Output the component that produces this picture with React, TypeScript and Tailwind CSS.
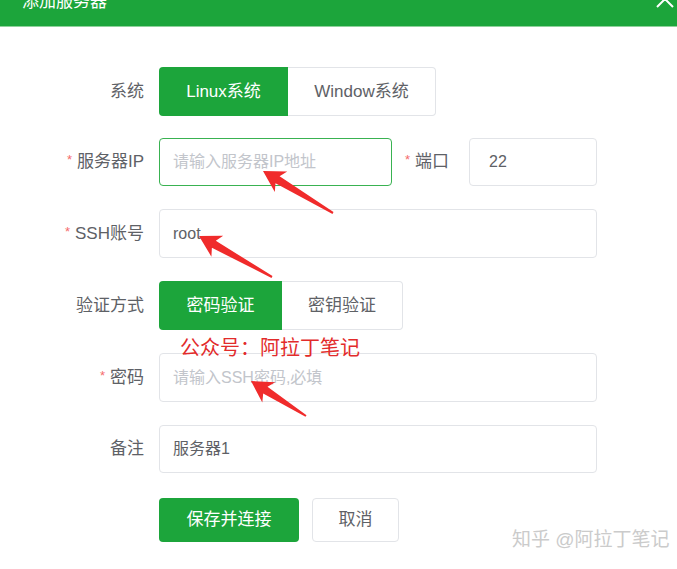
import React from 'react';

const GREEN = 'bg-[#1ca53b]';

type Pt = [number, number];

function arrowPoints(tip: Pt, tail: Pt): string {
  const dx = tail[0] - tip[0];
  const dy = tail[1] - tip[1];
  const len = Math.hypot(dx, dy);
  const ux = dx / len;
  const uy = dy / len;
  const nx = -uy;
  const ny = ux;
  const headLen = 21;
  const headHalf = 12;
  const neckHalf = 4;
  const tailHalf = 1;
  const at = (d: number, w: number): string =>
    `${(tip[0] + ux * d + nx * w).toFixed(1)},${(tip[1] + uy * d + ny * w).toFixed(1)}`;
  return [
    at(0, 0),
    at(headLen, headHalf),
    at(headLen - 4, neckHalf),
    at(len, tailHalf),
    at(len, -tailHalf),
    at(headLen - 4, -neckHalf),
    at(headLen, -headHalf),
  ].join(' ');
}

const Label: React.FC<{ text: string; required?: boolean }> = ({ text, required }) => (
  <div className="w-[144px] shrink-0 flex items-center justify-end text-[17px] text-[#5e6166]">
    {required && <span className="text-[#f56c6c] text-[13px] mr-[5px] -mt-[4px]">*</span>}
    <span>{text}</span>
  </div>
);

const Input: React.FC<{ value?: string; placeholder?: string; focused?: boolean; className?: string }> = ({
  value,
  placeholder,
  focused,
  className = '',
}) => (
  <div
    className={`h-full flex items-center px-[13px] rounded-[4px] border text-[16px] ${
      focused ? 'border-[#39b251]' : 'border-[#e2e4e8]'
    } ${className}`}
  >
    {value ? (
      <span className="text-[#5e6166]">{value}</span>
    ) : (
      <span className="text-[#c2c5cb]">{placeholder}</span>
    )}
  </div>
);

const Segmented: React.FC<{ items: { label: string; w: string }[] }> = ({ items }) => (
  <div className="flex h-full">
    {items.map((it, i) => (
      <div
        key={it.label}
        className={`${it.w} h-full flex items-center justify-center text-[17px] ${
          i === 0
            ? `${GREEN} text-white rounded-l-[4px]`
            : 'bg-white text-[#5e6166] border border-l-0 border-[#e2e4e8] rounded-r-[4px]'
        }`}
      >
        {it.label}
      </div>
    ))}
  </div>
);

export default function App() {
  return (
    <div
      className="relative w-[677px] h-[569px] bg-white overflow-hidden"
      style={{ fontFamily: '"Liberation Sans", "Noto Sans CJK SC", sans-serif' }}
    >
      {/* header, scrolled partly out of view */}
      <div className={`relative h-[27px] ${GREEN} border-b border-[#8fd29b] overflow-hidden flex items-start px-[22px]`}>
        <div className="text-white text-[17px] leading-[17px] -mt-[7px]">添加服务器</div>
        <svg className="absolute right-[2px] -top-[11px]" width="20" height="20" viewBox="0 0 20 20">
          <path d="M2 2 L18 18 M18 2 L2 18" stroke="white" strokeWidth="2" fill="none" />
        </svg>
      </div>

      <div className="flex flex-col pt-[40px]">
        <div className="flex h-[49px]">
          <Label text="系统" />
          <div className="ml-[15px] h-full">
            <Segmented
              items={[
                { label: 'Linux系统', w: 'w-[129px]' },
                { label: 'Window系统', w: 'w-[148px]' },
              ]}
            />
          </div>
        </div>

        <div className="flex h-[48px] mt-[22px]">
          <Label text="服务器IP" required />
          <Input className="ml-[15px] w-[233px]" placeholder="请输入服务器IP地址" focused />
          <div className="ml-[13px] flex items-center text-[17px] text-[#5e6166]">
            <span className="text-[#f56c6c] text-[13px] mr-[5px] -mt-[4px]">*</span>
            <span>端口</span>
          </div>
          <Input className="ml-[20px] w-[128px] pl-[19px]" value="22" />
        </div>

        <div className="flex h-[49px] mt-[23px]">
          <Label text="SSH账号" required />
          <Input className="ml-[15px] w-[438px]" value="root" />
        </div>

        <div className="flex h-[49px] mt-[23px]">
          <Label text="验证方式" />
          <div className="ml-[15px] h-full">
            <Segmented
              items={[
                { label: '密码验证', w: 'w-[123px]' },
                { label: '密钥验证', w: 'w-[121px]' },
              ]}
            />
          </div>
        </div>

        <div className="flex h-[49px] mt-[23px]">
          <Label text="密码" required />
          <Input className="ml-[15px] w-[438px]" placeholder="请输入SSH密码,必填" />
        </div>

        <div className="flex h-[48px] mt-[23px]">
          <Label text="备注" />
          <Input className="ml-[15px] w-[438px]" value="服务器1" />
        </div>

        <div className="flex h-[44px] mt-[25px] pl-[159px] gap-[13px]">
          <button className={`w-[140px] h-full rounded-[4px] ${GREEN} text-white text-[17px]`}>保存并连接</button>
          <button className="w-[87px] h-full rounded-[4px] border border-[#e2e4e8] bg-white text-[#5e6166] text-[17px]">
            取消
          </button>
        </div>
      </div>

      {/* annotations */}
      <div className="absolute left-[180px] top-[335px] text-[20px] text-[#e22b2b] leading-[26px]">公众号：阿拉丁笔记</div>
      <svg className="absolute inset-0 pointer-events-none" width="677" height="569">
        <polygon points={arrowPoints([263, 171], [333, 213])} fill="#f02b2b" />
        <polygon points={arrowPoints([199, 236], [272, 277])} fill="#f02b2b" />
        <polygon points={arrowPoints([251, 381], [306, 416])} fill="#f02b2b" />
      </svg>
      <div
        className="absolute left-[512px] top-[528px] text-[19px] text-[#cbcbcb] leading-[24px]"
        style={{ textShadow: '0 0 1px #fff' }}
      >
        知乎 @阿拉丁笔记
      </div>
    </div>
  );
}
